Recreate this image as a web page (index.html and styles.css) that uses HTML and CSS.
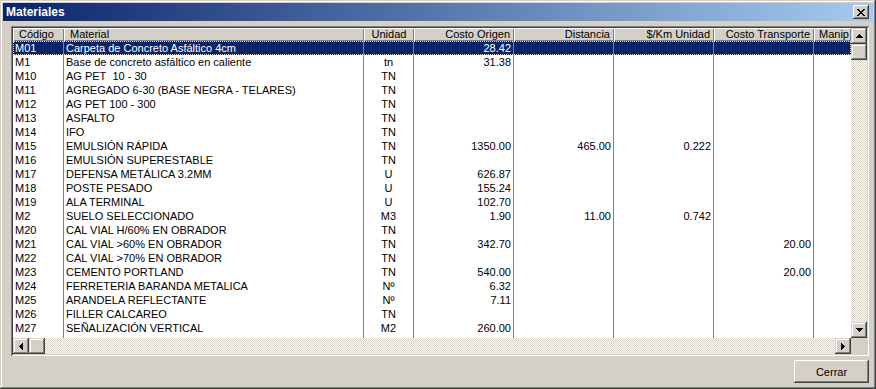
FILE: index.html
```html
<!DOCTYPE html>
<html lang="es">
<head>
<meta charset="UTF-8" />
<title>Materiales</title>
<link rel="stylesheet" href="styles.css">
</head>
<body>
  <div class="window">
    <div class="titlebar">
      <span class="title">Materiales</span>
      <div class="close-btn">
        <svg width="8" height="7" viewBox="0 0 8 7" shape-rendering="crispEdges">
          <rect x="0" y="0" width="2" height="1"/><rect x="6" y="0" width="2" height="1"/>
          <rect x="1" y="1" width="2" height="1"/><rect x="5" y="1" width="2" height="1"/>
          <rect x="2" y="2" width="4" height="1"/>
          <rect x="3" y="3" width="2" height="1"/>
          <rect x="2" y="4" width="4" height="1"/>
          <rect x="1" y="5" width="2" height="1"/><rect x="5" y="5" width="2" height="1"/>
          <rect x="0" y="6" width="2" height="1"/><rect x="6" y="6" width="2" height="1"/>
        </svg>
      </div>
    </div>

    <div class="listbox">
      <div class="view">
        <table class="grid">
          <colgroup>
            <col class="w-code"><col class="w-mat"><col class="w-unit"><col class="w-num">
            <col class="w-num"><col class="w-num"><col class="w-num"><col class="w-manip">
          </colgroup>
          <thead>
            <tr>
              <th>Código</th>
              <th>Material</th>
              <th class="center">Unidad</th>
              <th class="right">Costo Origen</th>
              <th class="right">Distancia</th>
              <th class="right">$/Km Unidad</th>
              <th class="right">Costo Transporte</th>
              <th class="last">Manip</th>
            </tr>
          </thead>
          <tbody>
            <tr class="sel"><td>M01</td><td>Carpeta de Concreto Asfáltico 4cm</td><td class="center"></td><td class="right">28.42</td><td></td><td></td><td></td><td></td></tr>
            <tr><td>M1</td><td>Base de concreto asfáltico en caliente</td><td class="center">tn</td><td class="right">31.38</td><td></td><td></td><td></td><td></td></tr>
            <tr><td>M10</td><td>AG PET&nbsp; 10 - 30</td><td class="center">TN</td><td></td><td></td><td></td><td></td><td></td></tr>
            <tr><td>M11</td><td>AGREGADO 6-30 (BASE NEGRA - TELARES)</td><td class="center">TN</td><td></td><td></td><td></td><td></td><td></td></tr>
            <tr><td>M12</td><td>AG PET 100 - 300</td><td class="center">TN</td><td></td><td></td><td></td><td></td><td></td></tr>
            <tr><td>M13</td><td>ASFALTO</td><td class="center">TN</td><td></td><td></td><td></td><td></td><td></td></tr>
            <tr><td>M14</td><td>IFO</td><td class="center">TN</td><td></td><td></td><td></td><td></td><td></td></tr>
            <tr><td>M15</td><td>EMULSIÓN RÁPIDA</td><td class="center">TN</td><td class="right">1350.00</td><td class="right">465.00</td><td class="right">0.222</td><td></td><td></td></tr>
            <tr><td>M16</td><td>EMULSIÓN SUPERESTABLE</td><td class="center">TN</td><td></td><td></td><td></td><td></td><td></td></tr>
            <tr><td>M17</td><td>DEFENSA METÁLICA 3.2MM</td><td class="center">U</td><td class="right">626.87</td><td></td><td></td><td></td><td></td></tr>
            <tr><td>M18</td><td>POSTE PESADO</td><td class="center">U</td><td class="right">155.24</td><td></td><td></td><td></td><td></td></tr>
            <tr><td>M19</td><td>ALA TERMINAL</td><td class="center">U</td><td class="right">102.70</td><td></td><td></td><td></td><td></td></tr>
            <tr><td>M2</td><td>SUELO SELECCIONADO</td><td class="center">M3</td><td class="right">1.90</td><td class="right">11.00</td><td class="right">0.742</td><td></td><td></td></tr>
            <tr><td>M20</td><td>CAL VIAL H/60% EN OBRADOR</td><td class="center">TN</td><td></td><td></td><td></td><td></td><td></td></tr>
            <tr><td>M21</td><td>CAL VIAL &gt;60% EN OBRADOR</td><td class="center">TN</td><td class="right">342.70</td><td></td><td></td><td class="right">20.00</td><td></td></tr>
            <tr><td>M22</td><td>CAL VIAL &gt;70% EN OBRADOR</td><td class="center">TN</td><td></td><td></td><td></td><td></td><td></td></tr>
            <tr><td>M23</td><td>CEMENTO PORTLAND</td><td class="center">TN</td><td class="right">540.00</td><td></td><td></td><td class="right">20.00</td><td></td></tr>
            <tr><td>M24</td><td>FERRETERIA BARANDA METALICA</td><td class="center">Nº</td><td class="right">6.32</td><td></td><td></td><td></td><td></td></tr>
            <tr><td>M25</td><td>ARANDELA REFLECTANTE</td><td class="center">Nº</td><td class="right">7.11</td><td></td><td></td><td></td><td></td></tr>
            <tr><td>M26</td><td>FILLER CALCAREO</td><td class="center">TN</td><td></td><td></td><td></td><td></td><td></td></tr>
            <tr><td>M27</td><td>SEÑALIZACIÓN VERTICAL</td><td class="center">M2</td><td class="right">260.00</td><td></td><td></td><td></td><td></td></tr>
            <tr class="filler"><td></td><td></td><td></td><td></td><td></td><td></td><td></td><td></td></tr>
          </tbody>
        </table>
      </div>

      <div class="vscroll">
        <div class="sb-btn">
          <svg width="7" height="4" shape-rendering="crispEdges"><rect x="3" y="0" width="1" height="1"/><rect x="2" y="1" width="3" height="1"/><rect x="1" y="2" width="5" height="1"/><rect x="0" y="3" width="7" height="1"/></svg>
        </div>
        <div class="sb-btn"></div>
        <div class="track"></div>
        <div class="sb-btn">
          <svg width="7" height="4" shape-rendering="crispEdges"><rect x="0" y="0" width="7" height="1"/><rect x="1" y="1" width="5" height="1"/><rect x="2" y="2" width="3" height="1"/><rect x="3" y="3" width="1" height="1"/></svg>
        </div>
      </div>

      <div class="hscroll">
        <div class="sb-btn">
          <svg width="4" height="7" shape-rendering="crispEdges"><rect x="0" y="3" width="1" height="1"/><rect x="1" y="2" width="1" height="3"/><rect x="2" y="1" width="1" height="5"/><rect x="3" y="0" width="1" height="7"/></svg>
        </div>
        <div class="sb-btn"></div>
        <div class="track"></div>
        <div class="sb-btn">
          <svg width="4" height="7" shape-rendering="crispEdges"><rect x="0" y="0" width="1" height="7"/><rect x="1" y="1" width="1" height="5"/><rect x="2" y="2" width="1" height="3"/><rect x="3" y="3" width="1" height="1"/></svg>
        </div>
      </div>

      <div class="corner"></div>
    </div>

    <div class="footer">
      <div class="button">Cerrar</div>
    </div>
  </div>
</body>
</html>
```

FILE: styles.css
```css
body {
  margin: 0;
  font-family: "Liberation Sans", Arial, sans-serif;
  font-size: 11px;
  color: #000;
  background: #d4d0c8;
}
.window {
  width: 876px;
  height: 389px;
  box-sizing: border-box;
  padding: 3px;
  background: #d4d0c8;
  box-shadow: inset -1px -1px #404040, inset 1px 1px #d4d0c8, inset -2px -2px #808080, inset 2px 2px #fff;
  display: flex;
  flex-direction: column;
}
.titlebar {
  height: 18px;
  display: flex;
  align-items: center;
  justify-content: space-between;
  padding: 0 4px 0 3px;
  background: linear-gradient(90deg, #0a246a, #a6caf0);
}
.title {
  color: #fff;
  font-weight: bold;
  font-size: 12px;
}
.close-btn {
  width: 16px;
  height: 14px;
  display: flex;
  align-items: center;
  justify-content: center;
  padding-right: 1px;
  box-sizing: border-box;
  background: #d4d0c8;
  box-shadow: inset -1px -1px #404040, inset 1px 1px #fff, inset -2px -2px #808080, inset 2px 2px #d4d0c8;
}

/* list view */
.listbox {
  margin: 5px 4px 0 8px;
  padding: 2px;
  background: #fff;
  box-shadow: inset 1px 1px #808080, inset -1px -1px #fff, inset 2px 2px #404040, inset -2px -2px #d4d0c8;
  display: grid;
  grid-template-columns: 838px 16px;
  grid-template-rows: 310px 16px;
}
.view {
  overflow: hidden;
  background: #fff;
}
.grid {
  width: 838px;
  table-layout: fixed;
  border-collapse: separate;
  border-spacing: 0;
}
.w-code { width: 51px; }
.w-mat { width: 300px; }
.w-unit { width: 50px; }
.w-num { width: 100px; }
.w-manip { width: 37px; }
.grid th {
  height: 13px;
  padding: 0 6px;
  font-weight: normal;
  text-align: left;
  line-height: 13px;
  white-space: nowrap;
  overflow: hidden;
  background: #d4d0c8;
  box-shadow: inset 1px 1px #fff, inset -1px -1px #808080;
}
.grid th.right {
  text-align: right;
  padding-right: 4px;
}
.grid th.center {
  text-align: center;
}
.grid th.last {
  padding: 0 0 0 5px;
  text-overflow: clip;
  overflow: visible;
}
.grid td {
  height: 14px;
  padding: 0 2px;
  line-height: 14px;
  white-space: nowrap;
  overflow: hidden;
  border-right: 1px solid #808080;
}
.grid td:last-child {
  border-right: none;
}
.grid td.right {
  text-align: right;
}
.grid td.center {
  text-align: center;
}
.grid tr.sel td {
  background: #0a246a;
  color: #fff;
}
.grid tr.sel {
  outline: 1px dotted #e0dccf;
  outline-offset: -1px;
}
.grid tr.filler td {
  height: 3px;
  line-height: 0;
}

/* scrollbars */
.vscroll, .hscroll {
  display: flex;
}
.vscroll {
  flex-direction: column;
}
.sb-btn {
  width: 16px;
  height: 16px;
  flex: none;
  display: flex;
  align-items: center;
  justify-content: center;
  background: #d4d0c8;
  box-shadow: inset -1px -1px #404040, inset 1px 1px #d4d0c8, inset -2px -2px #808080, inset 2px 2px #fff;
}
.track {
  flex: 1;
  background-color: #fff;
  background-image: repeating-conic-gradient(#d4d0c8 0% 25%, #fff 0% 50%);
  background-size: 2px 2px;
}
.corner {
  background: #d4d0c8;
}

.footer {
  display: flex;
  justify-content: flex-end;
  padding: 4px 4px 0 0;
}
.button {
  width: 75px;
  height: 23px;
  display: flex;
  align-items: center;
  justify-content: center;
  background: #d4d0c8;
  box-shadow: inset -1px -1px #404040, inset 1px 1px #fff, inset -2px -2px #808080, inset 2px 2px #d4d0c8;
}
```
